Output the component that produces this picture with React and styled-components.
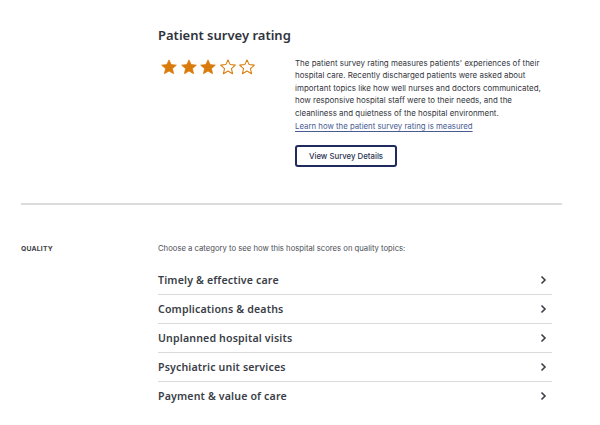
import React from 'react'
import styled, { createGlobalStyle } from 'styled-components'

const GlobalStyle = createGlobalStyle`
  body {
    margin: 0;
    background: #fff;
    font-family: "Inter", "Noto Sans", sans-serif;
    color: #333;
  }
`

const categories = [
  'Timely & effective care',
  'Complications & deaths',
  'Unplanned hospital visits',
  'Psychiatric unit services',
  'Payment & value of care',
]

const Star = ({ filled }) => (
  <svg width="18" height="18" viewBox="0 0 24 24">
    <path
      d="M12 2.5l2.9 6.3 6.9.7-5.2 4.6 1.5 6.8L12 17.4l-6.1 3.5 1.5-6.8-5.2-4.6 6.9-.7z"
      fill={filled ? '#d97b0b' : 'none'}
      stroke="#d97b0b"
      strokeWidth={filled ? 1 : 1.4}
      strokeLinejoin="round"
    />
  </svg>
)

const Chevron = () => (
  <svg width="8" height="10" viewBox="0 0 8 10">
    <path d="M2.5 1.5L6 5l-3.5 3.5" fill="none" stroke="#3b3f48" strokeWidth="1.6" />
  </svg>
)

const App = () => {
  return (
    <Page>
      <GlobalStyle />
      <Survey>
        <Title>Patient survey rating</Title>
        <SurveyBody>
          <Stars>
            {[1, 2, 3, 4, 5].map((n) => (
              <Star key={n} filled={n <= 3} />
            ))}
          </Stars>
          <Details>
            <Description>
              The patient survey rating measures patients' experiences of their hospital care.
              Recently discharged patients were asked about important topics like how well nurses
              and doctors communicated, how responsive hospital staff were to their needs, and the
              cleanliness and quietness of the hospital environment.
            </Description>
            <LearnLink href="#">Learn how the patient survey rating is measured</LearnLink>
            <OutlineButton>View Survey Details</OutlineButton>
          </Details>
        </SurveyBody>
      </Survey>
      <Divider />
      <Quality>
        <SectionLabel>QUALITY</SectionLabel>
        <div>
          <Intro>Choose a category to see how this hospital scores on quality topics:</Intro>
          <CategoryList>
            {categories.map((c) => (
              <CategoryRow key={c}>
                <span>{c}</span>
                <Chevron />
              </CategoryRow>
            ))}
          </CategoryList>
        </div>
      </Quality>
    </Page>
  )
}

const Page = styled.div`
  width: 600px;
  height: 425px;
  box-sizing: border-box;
  padding: 0 38px 0 21px;
  overflow: hidden;
`

const Survey = styled.section`
  padding: 26px 0 0 137px;
`

const Title = styled.h2`
  margin: 0;
  font-family: "Noto Sans", sans-serif;
  font-weight: 600;
  font-size: 13px;
  color: #2f333b;
  line-height: 18px;
`

const SurveyBody = styled.div`
  display: flex;
  margin-top: 13px;
`

const Stars = styled.div`
  display: flex;
  gap: 1.5px;
  width: 135px;
  padding-left: 2px;
  padding-top: 1px;
  height: 20px;
`

const Details = styled.div`
  display: flex;
  flex-direction: column;
  align-items: flex-start;
  width: 248px;
`

const Description = styled.p`
  margin: 0;
  font-size: 7.95px;
  line-height: 12.4px;
  color: #33363d;
`

const LearnLink = styled.a`
  margin-top: 1px;
  font-size: 7.8px;
  line-height: 12px;
  color: #4a5b93;
  text-decoration: underline;
  text-underline-offset: 1.5px;
`

const OutlineButton = styled.button`
  margin-top: 13px;
  width: 102px;
  height: 22px;
  border: 2px solid #1e2b5c;
  border-radius: 3px;
  background: #fff;
  font-family: "Inter", sans-serif;
  font-size: 7.8px;
  font-weight: 500;
  color: #2a3352;
  padding: 0;
`

const Divider = styled.hr`
  margin: 36px 0 0;
  border: none;
  border-top: 2px solid #dcdcdc;
`

const Quality = styled.section`
  display: grid;
  grid-template-columns: 137px 394px;
  margin-top: 38px;
`

const SectionLabel = styled.div`
  font-size: 6.8px;
  font-weight: 700;
  color: #3c3f46;
  letter-spacing: 0.2px;
  line-height: 12px;
`

const Intro = styled.p`
  margin: 0;
  font-size: 7.7px;
  line-height: 12px;
  color: #4a4d54;
`

const CategoryList = styled.div`
  margin-top: 11px;
`

const CategoryRow = styled.div`
  display: flex;
  justify-content: space-between;
  align-items: center;
  height: 28px;
  padding-right: 5px;
  border-bottom: 1.5px solid #dadada;
  font-family: "Noto Sans", sans-serif;
  font-weight: 600;
  font-size: 10.6px;
  letter-spacing: 0.15px;
  color: #3a3e47;

  &:last-child {
    border-bottom: none;
  }
`

export default App
